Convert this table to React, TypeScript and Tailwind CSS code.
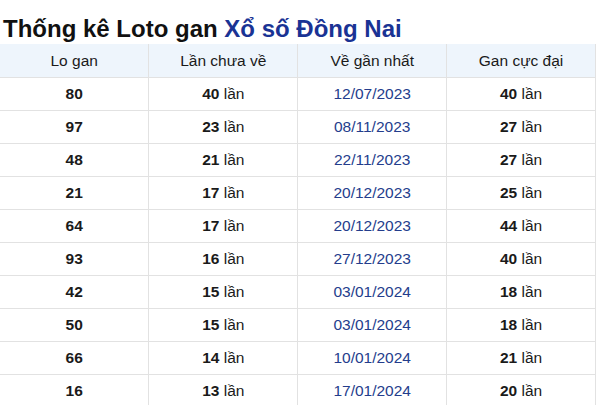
import React from "react";

const rows = [
  ["80", "40", "12/07/2023", "40"],
  ["97", "23", "08/11/2023", "27"],
  ["48", "21", "22/11/2023", "27"],
  ["21", "17", "20/12/2023", "25"],
  ["64", "17", "20/12/2023", "44"],
  ["93", "16", "27/12/2023", "40"],
  ["42", "15", "03/01/2024", "18"],
  ["50", "15", "03/01/2024", "18"],
  ["66", "14", "10/01/2024", "21"],
  ["16", "13", "17/01/2024", "20"],
];

const App = () => {
  return (
    <div className="w-[600px] h-[405px] overflow-hidden bg-white font-['Liberation_Sans',Arial,sans-serif] text-[#1a1a1a]">
      {/* Title */}
      <h1 className="pl-[3px] pt-[15px] pb-[1px] text-[24px] leading-[28px] font-bold text-[#111]">
        Thống kê Loto gan <span className="text-[#1a3394]">Xổ số Đồng Nai</span>
      </h1>

      {/* Table */}
      <table className="w-[596px] border-collapse table-fixed text-[15.5px]">
        <thead>
          <tr className="h-[33px] bg-[#eef5fc]">
            <th className="font-normal border-r border-b border-[#e2e2e2]">Lo gan</th>
            <th className="font-normal border-r border-b border-[#e2e2e2]">Lần chưa về</th>
            <th className="font-normal border-r border-b border-[#e2e2e2]">Về gần nhất</th>
            <th className="font-normal border-r border-b border-[#e2e2e2]">Gan cực đại</th>
          </tr>
        </thead>
        <tbody>
          {rows.map((r, i) => (
            <tr key={i} className="h-[33px] text-center">
              <td className="font-bold border-r border-b border-[#e2e2e2]">{r[0]}</td>
              <td className="border-r border-b border-[#e2e2e2]">
                <b>{r[1]}</b> lần
              </td>
              <td className="text-[#243d8c] border-r border-b border-[#e2e2e2]">{r[2]}</td>
              <td className="border-r border-b border-[#e2e2e2]">
                <b>{r[3]}</b> lần
              </td>
            </tr>
          ))}
        </tbody>
      </table>
    </div>
  );
};

export default App;
